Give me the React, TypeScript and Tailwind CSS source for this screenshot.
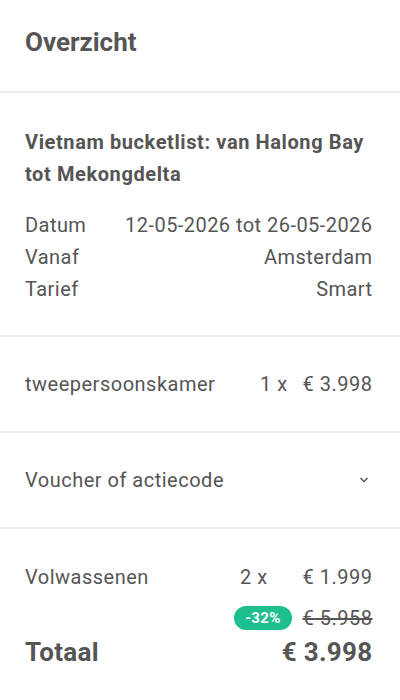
const details = [
  { label: "Datum", value: "12-05-2026 tot 26-05-2026" },
  { label: "Vanaf", value: "Amsterdam" },
  { label: "Tarief", value: "Smart" },
];

const Divider = () => <div className="h-[2px] w-full bg-[#ececec]" />;

export default function App() {
  return (
    <div
      className="w-[400px] h-[700px] bg-white text-[#555555] overflow-hidden tracking-[0.5px]"
      style={{ fontFamily: "Roboto, 'Liberation Sans', sans-serif" }}
    >
      <div className="pl-[25px] pr-[28px] h-[91px] flex items-center">
        <h1 className="text-[26px] font-bold pb-[7px] tracking-normal">Overzicht</h1>
      </div>
      <Divider />

      <section className="pl-[25px] pr-[27.5px] pt-[33px] pb-[30px]">
        <h2 className="text-[20px] font-bold leading-[32px] tracking-[0.6px]">
          Vietnam bucketlist: van Halong Bay tot Mekongdelta
        </h2>
        <div className="mt-[19px] text-[20px] leading-[32px] tracking-[0.45px]">
          {details.map((item) => (
            <div key={item.label} className="flex justify-between">
              <span>{item.label}</span>
              <span>{item.value}</span>
            </div>
          ))}
        </div>
      </section>
      <Divider />

      <section className="pl-[25px] pr-[27.5px] h-[94px] flex items-center text-[20px]">
        <span className="flex-1">tweepersoonskamer</span>
        <span>1 x</span>
        <span className="ml-[15px]">€ 3.998</span>
      </section>
      <Divider />

      <button
        type="button"
        className="pl-[25px] pr-[31px] h-[94px] w-full flex items-center justify-between text-[20px]"
      >
        <span>Voucher of actiecode</span>
        <svg width="10" height="6" viewBox="0 0 10 6" fill="none">
          <path d="M1.5 1l3.5 3.5L8.5 1" stroke="#555555" strokeWidth="1.5" />
        </svg>
      </button>
      <Divider />

      <section className="pl-[25px] pr-[27.5px] pt-[32px]">
        <div className="flex items-center text-[20px] leading-[32px]">
          <span className="flex-1">Volwassenen</span>
          <span>2 x</span>
          <span className="ml-[35px]">€ 1.999</span>
        </div>
        <div className="flex items-center justify-end gap-[11px] mt-[13px]">
          <span className="rounded-full bg-[#1dbf8f] text-white text-[15px] font-bold px-[11px] h-[24px] flex items-center tracking-[0.3px]">
            -32%
          </span>
          <span className="text-[20px] leading-[24px] line-through">€ 5.958</span>
        </div>
        <div className="flex items-center justify-between text-[26px] font-bold leading-[36px] mt-[4px] tracking-[0.3px]">
          <span>Totaal</span>
          <span>€ 3.998</span>
        </div>
      </section>
    </div>
  );
}
